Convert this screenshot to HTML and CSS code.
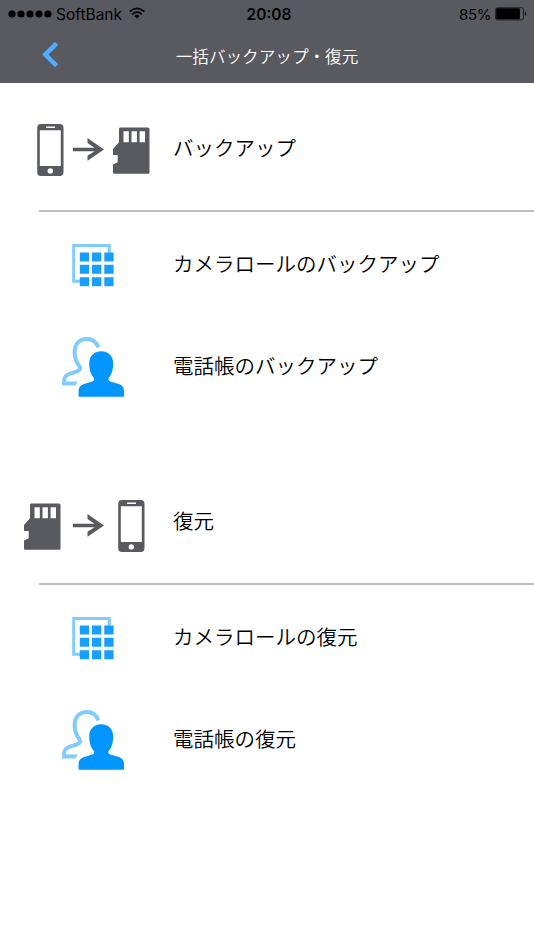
FILE: index.html
```html
<!DOCTYPE html>
<html lang="ja">
<head>
<meta charset="utf-8">
<title>一括バックアップ・復元</title>
<link rel="stylesheet" href="styles.css">
</head>
<body>
<svg class="defs" width="0" height="0" aria-hidden="true">
  <symbol id="phone" viewBox="0 0 27 52">
    <path fill="#595a5f" fill-rule="evenodd" d="M3.8 0H22.8Q26.5 0 26.5 4V48Q26.5 52 22.8 52H3.8Q.2 52 .2 48V4Q.2 0 3.8 0ZM2.8 6.3V42H23.8V6.3ZM9 2.5V4H18V2.5ZM13.3 44.2A2.7 2.7 0 1 0 13.3 49.6A2.7 2.7 0 1 0 13.3 44.2Z"/>
  </symbol>
  <symbol id="arrow" viewBox="0 0 31 24">
    <path fill="#595a5f" d="M0 9.7H21.5L14.5 5V0L31 11.5L14.5 22.8V17.8L21.5 13.3H0Z"/>
  </symbol>
  <symbol id="card" viewBox="0 0 37 47">
    <path fill="#595a5f" fill-rule="evenodd" d="M7.3 .5H35Q36.5 .5 36.5 2V45.5Q36.5 46.7 35.3 46.7H1.2Q0 46.7 0 45.5V37.5L4.7 35.2V28H0V22L6 15.2V2Q6 .5 7.3 .5ZM10.5 4.3V15.2H15.8V4.3ZM18.5 4.3V15.2H23.9V4.3ZM26.6 4.3V15.2H32V4.3Z"/>
  </symbol>
  <symbol id="grid" viewBox="0 0 42 44">
    <path fill="none" stroke="#80ccff" stroke-width="3" d="M8 38.3H1.7V2.5H37.3V10"/>
    <path fill="#189eff" d="M7.8 9.5h9.3v9h-9.3zM20 9.5h9.3v9H20zM32.3 9.5h9.3v9h-9.3zM7.8 21.8h9.3v9h-9.3zM20 21.8h9.3v9H20zM32.3 21.8h9.3v9h-9.3zM7.8 34.2h9.3v9h-9.3zM20 34.2h9.3v9H20zM32.3 34.2h9.3v9h-9.3z"/>
  </symbol>
  <symbol id="people" viewBox="0 0 64 62">
    <path fill="none" stroke="#80ccff" stroke-width="4" d="M36.3 11.4C34.5 6 30.5 2.9 24.7 2.9C17.2 2.9 12.6 8.2 12.6 15.8C12.6 22.5 14.2 26 17.2 30C19 32.6 18.3 34.2 14.5 35.6L8 37.7C3.5 39.2 2.1 41 2.1 45V47.6H12.8"/>
    <path fill="#80ccff" d="M12.5 45.6H16L13.2 49.6H12.5Z"/>
    <path fill="#0095ff" d="M39.2 15.3C46.8 15.3 51.2 20.5 51.2 27.5C51.2 33.5 49.7 38.5 46.9 41.8C45.8 43.3 46.3 44.6 48.2 45.5L56 47.8C60.8 49.4 62 51.4 62 55.6V60.8H16.6V55.6C16.6 51.4 18 49.4 23 47.8L30.3 45.5C32.2 44.6 32.8 43.3 31.6 41.8C28.7 38.5 27.2 33.5 27.2 27.5C27.2 20.5 31.8 15.3 39.2 15.3Z"/>
  </symbol>
</svg>

<header class="header">
  <div class="status">
    <div class="carrier">
      <svg class="signal" width="44" height="8" viewBox="0 0 44 8"><circle cx="4" cy="4" r="3.6"/><circle cx="13" cy="4" r="3.6"/><circle cx="22" cy="4" r="3.6"/><circle cx="31" cy="4" r="3.6"/><circle cx="40" cy="4" r="3.6"/></svg>
      <span class="carrier-name">SoftBank</span>
      <svg class="wifi" width="16" height="12" viewBox="0 0 16 12"><g fill="none" stroke="#000" stroke-width="1.7"><path d="M.6 4.6Q8-2 15.4 4.6"/><path d="M3.2 7.3Q8 3 12.8 7.3"/></g><path d="M8 11.5L5.4 8.9Q8 6.8 10.6 8.9Z"/></svg>
    </div>
    <span class="time">20:08</span>
    <div class="power">
      <span class="percent">85%</span>
      <svg class="battery" width="32" height="14" viewBox="0 0 32 14"><rect x=".5" y=".7" width="28" height="12.2" rx="1.8" fill="none" stroke="#252528"/><rect x="1.2" y="1.3" width="23.7" height="11" rx="1"/><path d="M29.8 4.8Q31.4 5.2 31.4 6.8T29.8 8.8Z"/></svg>
    </div>
  </div>
  <nav class="nav">
    <svg class="back" width="18" height="28" viewBox="0 0 18 28"><path fill="none" stroke="#53adff" stroke-width="4.4" d="M14.6 2.4L3.3 13.6L14.6 24.8"/></svg>
    <h1 class="title">一括バックアップ・復元</h1>
    <span></span>
  </nav>
</header>

<main>
  <section class="section">
    <div class="row head">
      <div class="icons backup"><svg class="phone"><use href="#phone"/></svg><svg class="arrow"><use href="#arrow"/></svg><svg class="card"><use href="#card"/></svg></div>
      <h2 class="label">バックアップ</h2>
    </div>
    <div class="row item">
      <div class="icons"><svg class="grid"><use href="#grid"/></svg></div>
      <span class="label">カメラロールのバックアップ</span>
    </div>
    <div class="row item">
      <div class="icons"><svg class="people"><use href="#people"/></svg></div>
      <span class="label">電話帳のバックアップ</span>
    </div>
  </section>
  <section class="section">
    <div class="row head">
      <div class="icons restore"><svg class="card"><use href="#card"/></svg><svg class="arrow"><use href="#arrow"/></svg><svg class="phone"><use href="#phone"/></svg></div>
      <h2 class="label">復元</h2>
    </div>
    <div class="row item">
      <div class="icons"><svg class="grid"><use href="#grid"/></svg></div>
      <span class="label">カメラロールの復元</span>
    </div>
    <div class="row item">
      <div class="icons"><svg class="people"><use href="#people"/></svg></div>
      <span class="label">電話帳の復元</span>
    </div>
  </section>
</main>
</body>
</html>
```
FILE: styles.css
```css
* { box-sizing: border-box; }
body {
  margin: 0;
  background: #fff;
  color: #000;
  font-family: "Noto Sans CJK JP", sans-serif;
  font-weight: 350;
}
svg { display: block; flex: none; }
.defs { position: absolute; }

.header { height: 83px; background: #595a5f; }
.status {
  display: grid;
  grid-template-columns: 1fr auto 1fr;
  align-items: center;
  height: 28px;
  padding: 0 7px 0 8px;
  font: 400 15.5px/28px Inter, sans-serif;
}
.carrier, .power { display: flex; align-items: center; }
.signal, .battery { margin-bottom: 2px; }
.carrier-name { margin: 0 8px 0 4px; padding-top: 1px; }
.wifi { margin: 0 0 3px -1px; }
.time { padding: 1px 0 0 3px; font-weight: 600; }
.power { justify-content: flex-end; gap: 4px; font-size: 15px; }
.percent { letter-spacing: -0.4px; }

.nav {
  display: grid;
  grid-template-columns: 1fr auto 1fr;
  align-items: center;
  height: 55px;
}
.back { margin: 0 0 2px 42px; }
.title { margin: 0; color: #fff; font-size: 16.6px; font-weight: 350; line-height: 56px; }

.section { height: 373px; }
.row { display: grid; grid-template-columns: 173px 1fr; }
.label { margin: 0; font-size: 20.5px; font-weight: 350; white-space: nowrap; }
.head { position: relative; height: 129px; }
.head::after {
  content: "";
  position: absolute;
  left: 39px;
  right: 0;
  bottom: 0;
  height: 2px;
  background: #bebec0;
}
.head .label { line-height: 129px; }
.item { height: 102px; }
.item .label { line-height: 102px; }
.icons { display: flex; align-items: center; }

.phone { width: 27px; height: 52px; }
.arrow { width: 31px; height: 24px; }
.card { width: 37px; height: 47px; }
.grid { width: 42px; height: 44px; }
.people { width: 64px; height: 62px; margin-left: 1px; }
.backup { gap: 9px; padding: 5px 0 0 37px; }
.restore { gap: 12px; padding: 11px 0 0 24px; }
.restore .arrow { margin-right: 2px; }
.item .icons { justify-content: center; margin-left: 13px; padding-top: 3px; }
```
